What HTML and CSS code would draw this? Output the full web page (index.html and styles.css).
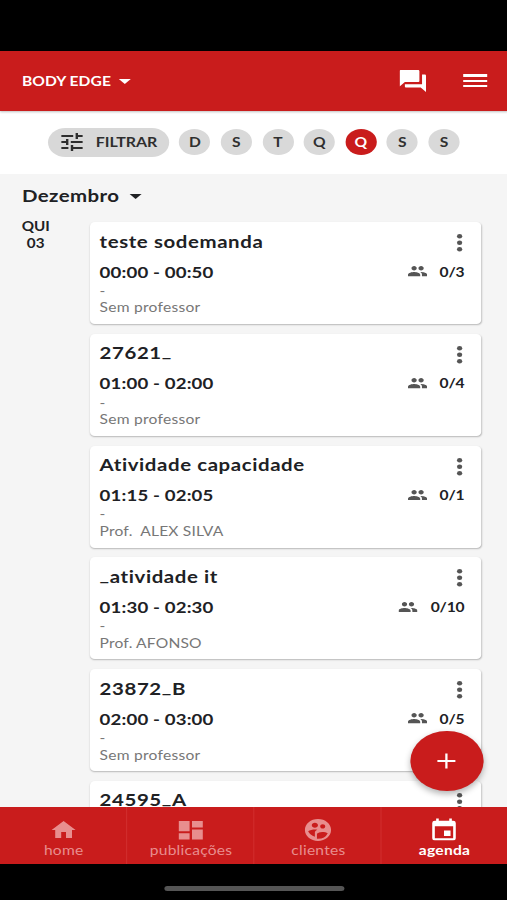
FILE: index.html
```html
<!DOCTYPE html>
<html lang="pt-BR">
<head>
<meta charset="utf-8">
<title>Agenda</title>
<link rel="stylesheet" href="styles.css">
</head>
<body>
<svg class="defs" aria-hidden="true">
  <symbol id="people" viewBox="1 5 22 14" preserveAspectRatio="none"><path d="M16 11c1.660 0 2.990-1.340 2.990-3S17.660 5 16 5s-3 1.340-3 3 1.340 3 3 3zm-8 0c1.660 0 2.990-1.340 2.990-3S9.660 5 8 5 5 6.340 5 8s1.340 3 3 3zm0 2c-2.330 0-7 1.170-7 3.500V19h14v-2.500C15 14.170 10.330 13 8 13zm8 0c-.29 0-.62.02-.97.05 1.160.84 1.970 1.970 1.970 3.450V19h6v-2.500c0-2.330-4.670-3.500-7-3.500z"/></symbol>
  <symbol id="more" viewBox="0 0 6 20"><circle cx="3" cy="3.300" r="2.200"/><circle cx="3" cy="9.800" r="2.200"/><circle cx="3" cy="16.300" r="2.200"/></symbol>
</svg>
<div class="app">
  <div class="status"></div>
  <header class="header">
    <span class="brand">BODY EDGE</span><i class="caret caret-light"></i>
    <svg class="chat" viewBox="2 2 20 20"><path d="M21 6h-2v9H6v2c0 .55.45 1 1 1h11l4 4V7c0-.55-.45-1-1-1zm-4 6V3c0-.55-.45-1-1-1H3c-.55 0-1 .45-1 1v14l4-4h10c.55 0 1-.45 1-1z"/></svg>
    <div class="burger"><i></i><i></i><i></i></div>
  </header>
  <div class="filters">
    <button class="filter"><svg viewBox="3 3 18 18"><path d="M3 17v2h6v-2H3zM3 5v2h10V5H3zm10 16v-2h8v-2h-8v-2h-2v6h2zM7 9v2H3v2h4v2h2V9H7zm14 4v-2H11v2h10zm-6-4h2V7h4V5h-4V3h-2v6z"/></svg><span>FILTRAR</span></button>
    <span class="day">D</span><span class="day">S</span><span class="day">T</span><span class="day">Q</span><span class="day active">Q</span><span class="day">S</span><span class="day">S</span>
  </div>
  <main class="content">
    <div class="month"><span>Dezembro</span><i class="caret"></i></div>
    <div class="schedule">
      <div class="date">QUI<br>03</div>
      <div class="cards">
        <article class="card">
          <div class="row"><h2>teste sodemanda</h2><svg class="more"><use href="#more"/></svg></div>
          <div class="row times"><b class="time">00:00 - 00:50</b><span class="count"><svg><use href="#people"/></svg>0/3</span></div>
          <p class="dash">-</p><p>Sem professor</p>
        </article>
        <article class="card">
          <div class="row"><h2>27621<span class="low">_</span></h2><svg class="more"><use href="#more"/></svg></div>
          <div class="row times"><b class="time">01:00 - 02:00</b><span class="count"><svg><use href="#people"/></svg>0/4</span></div>
          <p class="dash">-</p><p>Sem professor</p>
        </article>
        <article class="card">
          <div class="row"><h2>Atividade capacidade</h2><svg class="more"><use href="#more"/></svg></div>
          <div class="row times"><b class="time">01:15 - 02:05</b><span class="count"><svg><use href="#people"/></svg>0/1</span></div>
          <p class="dash">-</p><p class="prof">Prof. &nbsp;ALEX SILVA</p>
        </article>
        <article class="card">
          <div class="row"><h2><span class="low">_</span>atividade it</h2><svg class="more"><use href="#more"/></svg></div>
          <div class="row times"><b class="time">01:30 - 02:30</b><span class="count"><svg><use href="#people"/></svg>0/10</span></div>
          <p class="dash">-</p><p class="prof">Prof. AFONSO</p>
        </article>
        <article class="card">
          <div class="row"><h2>23872<span class="low">_</span>B</h2><svg class="more"><use href="#more"/></svg></div>
          <div class="row times"><b class="time">02:00 - 03:00</b><span class="count"><svg><use href="#people"/></svg>0/5</span></div>
          <p class="dash">-</p><p>Sem professor</p>
        </article>
        <article class="card">
          <div class="row"><h2>24595<span class="low">_</span>A</h2><svg class="more"><use href="#more"/></svg></div>
        </article>
      </div>
    </div>
    <button class="fab" aria-label="Adicionar"><svg viewBox="0 0 16 16"><path d="M8 .5v15M.5 8h15"/></svg></button>
  </main>
  <nav class="nav">
    <a><svg viewBox="0 0 24 24"><path d="M10 20v-6h4v6h5v-8h3L12 3 2 12h3v8z"/></svg><span>home</span></a>
    <a><svg viewBox="0 0 24 24"><path d="M2 13.200h9V3H2zm0 8.300h9v-6.300H2zm11 0h9V11.500h-9zM13 3v6.500h9V3z"/></svg><span>publicações</span></a>
    <a><svg viewBox="1 1 22 22"><path d="M11.990 2C6.470 2 2 6.480 2 12s4.470 10 9.990 10S22 17.520 22 12 17.510 2 11.990 2zm3.620 4.840c1.070 0 1.930.86 1.930 1.930s-.86 1.930-1.930 1.930-1.930-.86-1.930-1.930c-.01-1.070.86-1.930 1.930-1.930zm-6-1.580c1.300 0 2.360 1.060 2.360 2.360s-1.060 2.360-2.360 2.360-2.360-1.060-2.360-2.360 1.050-2.360 2.360-2.360zm0 9.130v3.750c-2.400-.75-4.300-2.600-5.140-4.960 1.050-1.120 3.670-1.690 5.140-1.690.53 0 1.200.08 1.900.22-1.640.87-1.900 2.020-1.900 2.680zM11.990 20c-.27 0-.53-.01-.79-.04v-4.070c0-1.420 2.940-2.130 4.400-2.130 1.070 0 2.920.39 3.840 1.150A8.020 8.020 0 0 1 11.990 20z"/></svg><span>clientes</span></a>
    <a class="current"><svg viewBox="1 .5 22 22"><path d="M17 12h-5v5h5v-5zM16 1v2H8V1H6v2H5a2 2 0 0 0-2 2v14a2 2 0 0 0 2 2h14a2 2 0 0 0 2-2V5a2 2 0 0 0-2-2h-1V1h-2zm3 18H5V8h14v11z"/></svg><span>agenda</span></a>
  </nav>
  <footer class="gesture"><i></i></footer>
</div>
</body>
</html>
```
FILE: styles.css
```css
* { box-sizing: border-box; }
html, body { margin: 0; height: 900px; overflow: hidden; background: #000; }
/* Laid out on a 422.5px wide screen and stretched to the full 507px. */
.app {
  width: 422.5px; height: 900px; display: flex; flex-direction: column;
  transform: scaleX(1.2); transform-origin: 0 0; overflow: hidden;
  font-family: Lato, "Open Sans", sans-serif; color: #202124;
}
h2, p { margin: 0; }
button { border: 0; padding: 0; font: inherit; color: inherit; }
svg { display: block; fill: currentColor; flex: none; }
.defs { display: none; }
.status { height: 51px; flex: none; background: #000; }
.header {
  height: 59.500px; flex: none; display: flex; align-items: center; padding: 0 16.300px 0 18.300px;
  background: #c91c1c; color: #fff; position: relative; z-index: 1;
  box-shadow: 0 1px 2px rgba(0,0,0,.25);
}
.brand { font-size: 13px; font-weight: 700; letter-spacing: .05px; }
.caret { width: 0; height: 0; border: 5px solid transparent; border-top-color: #202124; border-bottom: 0; margin: 1px 0 0 9px; }
.caret-light { border-top-color: #fff; margin-left: 6.500px; }
.chat { width: 22px; height: 22px; margin-left: auto; }
.burger { width: 20px; margin-left: 31px; display: flex; flex-direction: column; gap: 2.900px; }
.burger i { height: 2.500px; background: #fff; }
.filters { height: 63.500px; flex: none; background: #fff; display: flex; align-items: center; padding-left: 40.200px; gap: 8.600px; }
.filter {
  width: 100.600px; height: 29px; border-radius: 15px; background: #d8d8d8;
  display: flex; align-items: center; padding-left: 10.800px; gap: 10.500px;
  font-size: 13.300px; font-weight: 700; letter-spacing: -.05px; color: #2e2e2e;
}
.filter svg { width: 18px; height: 18px; }
.filter span { margin-left: .3px; }
.day {
  width: 26px; height: 26px; border-radius: 50%; background: #d9d9d9; color: #303030;
  display: flex; align-items: center; justify-content: center; font-size: 13px; font-weight: 700;
}
.day.active { background: #c91c1c; color: #fff; }
.content { height: 633px; flex: none; background: #f5f5f5; position: relative; overflow: hidden; }
.month { height: 43px; display: flex; align-items: center; padding-left: 18.300px; font-size: 17px; font-weight: 700; letter-spacing: .35px; }
.schedule { display: flex; align-items: flex-start; margin-top: 5px; }
.date { width: 75px; flex: none; padding-left: 18px; padding-right: 33.500px; text-align: center; font-size: 12.700px; line-height: 17px; font-weight: 700; margin-top: -4px; }
.cards { width: 326px; display: flex; flex-direction: column; gap: 9.800px; }
.card {
  height: 102px; background: #fff; border-radius: 4px; padding: 9.500px 14px 0 8px;
  box-shadow: 0 1px 1.500px rgba(0,0,0,.25);
}
.row { display: flex; align-items: center; justify-content: space-between; height: 20px; }
.row h2 { font-size: 17px; line-height: 20px; font-weight: 700; letter-spacing: .5px; white-space: nowrap; }
.low { vertical-align: 2px; line-height: 0; }
.more { width: 6px; height: 20px; margin-right: .7px; color: #555; margin-top: 3px; }
.times { margin-top: 10px; }
.time { font-size: 15.500px; letter-spacing: .13px; }
.count { display: flex; align-items: center; font-size: 13px; font-weight: 700; letter-spacing: -.15px; gap: 10.500px; }
.count svg { width: 16px; height: 10.500px; color: #555; }
.card p { font-size: 13px; line-height: 16px; color: #777; letter-spacing: .2px; margin-top: .7px; }
.card .dash { margin-top: 1.300px; }
.card .prof { letter-spacing: .14px; }
.fab {
  position: absolute; left: 342.200px; top: 556.500px; width: 60.500px; height: 60px; border-radius: 50%;
  background: #c91c1c; color: #fff; display: grid; place-items: center;
  box-shadow: 0 3px 6px rgba(0,0,0,.3);
}
.fab svg { width: 16px; height: 16px; fill: none; stroke: currentColor; stroke-width: 1.900; }
.nav { height: 56.500px; flex: none; display: flex; background: #c91c1c; }
.nav a {
  flex: 1; display: flex; flex-direction: column; align-items: center; padding-top: 10.500px;
  color: #e88e8e; font-size: 13px; line-height: 16px; letter-spacing: .2px;
  border-right: 1px solid #d02c2c; padding-left: 1px;
}
.nav a:last-child { border-right: 0; padding-left: 0; }
.nav svg { width: 24px; height: 24px; margin-bottom: .5px; }
.nav .current { color: #fff; font-weight: 700; }
.gesture { flex: 1; background: #000; display: flex; justify-content: center; padding: 22.500px 0 0 1px; }
.gesture i { width: 150px; height: 5px; border-radius: 3px; background: #555; }
```
